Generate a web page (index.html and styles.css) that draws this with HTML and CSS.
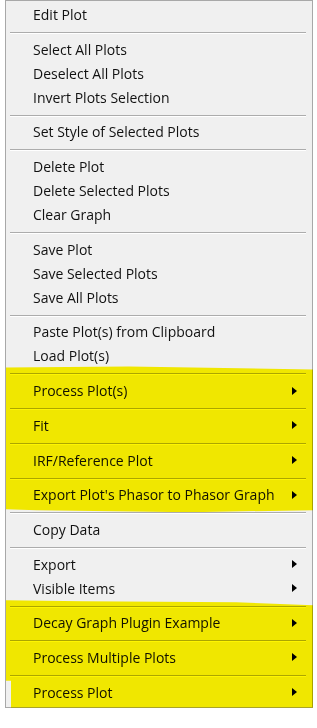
FILE: index.html
```html
<!DOCTYPE html>
<html lang="en">
<head>
    <meta charset="UTF-8">
    <title>Decay Graph Menu</title>
    <link rel="stylesheet" href="styles.css">
</head>
<body>
    <div class="menu">
        <div class="item">Edit Plot</div>
        <div class="sep"></div>
        <div class="item">Select All Plots</div>
        <div class="item">Deselect All Plots</div>
        <div class="item">Invert Plots Selection</div>
        <div class="sep"></div>
        <div class="item">Set Style of Selected Plots</div>
        <div class="sep"></div>
        <div class="item">Delete Plot</div>
        <div class="item">Delete Selected Plots</div>
        <div class="item">Clear Graph</div>
        <div class="sep"></div>
        <div class="item">Save Plot</div>
        <div class="item">Save Selected Plots</div>
        <div class="item">Save All Plots</div>
        <div class="sep"></div>
        <div class="item">Paste Plot(s) from Clipboard</div>
        <div class="item">Load Plot(s)</div>

        <!-- highlighted with a marker -->
        <div class="marked marked-top">
            <div class="sep"></div>
            <div class="item sub">Process Plot(s)</div>
            <div class="sep"></div>
            <div class="item sub">Fit</div>
            <div class="sep"></div>
            <div class="item sub">IRF/Reference Plot</div>
            <div class="sep"></div>
            <div class="item sub">Export Plot's Phasor to Phasor Graph</div>
        </div>

        <div class="sep"></div>
        <div class="item">Copy Data</div>
        <div class="sep"></div>
        <div class="item sub">Export</div>
        <div class="item sub">Visible Items</div>
        <div class="sep"></div>

        <div class="marked marked-bottom">
            <div class="item sub">Decay Graph Plugin Example</div>
            <div class="sep"></div>
            <div class="item sub">Process Multiple Plots</div>
            <div class="sep"></div>
            <div class="item sub">Process Plot</div>
        </div>
    </div>
</body>
</html>
```

FILE: styles.css
```css
body {
    margin: 0;
    background: #ffffff;
    font-family: "Open Sans", "Noto Sans", sans-serif;
    font-size: 14px;
    color: #000000;
}
.menu {
    width: 302px;
    margin-left: 5px;
    padding: 2px;
    background-color: #f0f0f0;
    border: 1px solid #a8a8a8;
}
.item {
    position: relative;
    height: 24px;
    line-height: 24px;
    padding-left: 25px;
    white-space: nowrap;
    color: #111;
}
/* little black arrow for submenus */
.item.sub::after {
    content: '';
    position: absolute;
    right: 13px;
    top: 7.5px;
    border-left: 5px solid #000;
    border-top: 4.5px solid transparent;
    border-bottom: 4.5px solid transparent;
}
.sep {
    height: 10.7px;
    margin: 0 4px 0 2px;
    background: linear-gradient(to bottom, transparent 5px, #acacac 5px, #acacac 6px, #ffffff 6px, #ffffff 7px, transparent 7px);
}
.marked {
    position: relative;
}
/* yellow highlighter stroke, blended over the menu */
.marked::after {
    content: '';
    position: absolute;
    left: -2px;
    right: -3px;
    background: #fff600;
    mix-blend-mode: multiply;
    pointer-events: none;
}
.marked-top::after {
    top: -2px;
    bottom: -5px;
    clip-path: polygon(0 1px, 40% 0, 100% 3px, 100% calc(100% - 2px), 60% 100%, 10% calc(100% - 2px), 0 calc(100% - 3px));
}
.marked-bottom::after {
    top: -11px;
    bottom: -3px;
    clip-path: polygon(0 0, 25% 1px, 75% 2px, 100% 5px, 100% 100%, 5px 100%, 5px calc(100% - 27px), 0 calc(100% - 27px));
}
```
